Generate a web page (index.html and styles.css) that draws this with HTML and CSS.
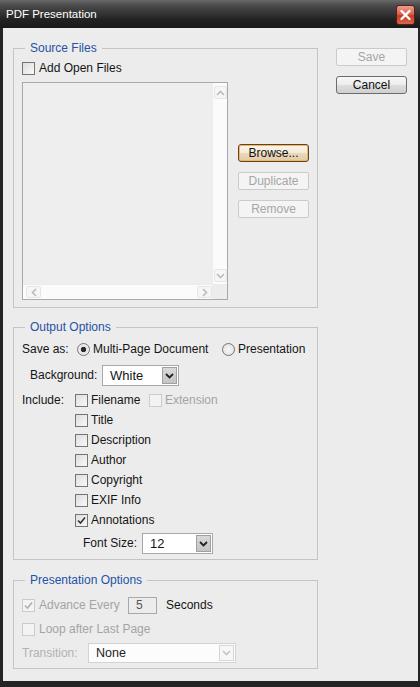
FILE: index.html
```html
<!DOCTYPE html>
<html>
<head>
<meta charset="utf-8">
<title>PDF Presentation</title>
<link rel="stylesheet" href="styles.css">
</head>
<body>
<div class="window">
  <div class="titlebar">
    <span class="title">PDF Presentation</span>
    <span class="close">
      <svg width="19" height="20" viewBox="0 0 19 20"><path d="M5.5 6 L13.5 14 M13.5 6 L5.5 14" stroke="#fff" stroke-width="2.4" stroke-linecap="round"/></svg>
    </span>
  </div>
  <div class="client">
    <div class="main">
      <fieldset class="group source">
        <legend>Source Files</legend>
        <div class="row add-open"><span class="cb"></span><span class="lbl">Add Open Files</span></div>
        <div class="source-body">
          <div class="listbox">
            <div class="list-area"></div>
            <div class="vscroll">
              <span class="sbtn"><svg width="9" height="6" viewBox="0 0 9 6"><path d="M1 5 L4.5 1.5 L8 5" fill="none" stroke="#b4bcc6" stroke-width="1.6"/></svg></span>
              <span class="sbtn"><svg width="9" height="6" viewBox="0 0 9 6"><path d="M1 1 L4.5 4.5 L8 1" fill="none" stroke="#b4bcc6" stroke-width="1.6"/></svg></span>
            </div>
            <div class="hscroll">
              <span class="sbtn h"><svg width="6" height="9" viewBox="0 0 6 9"><path d="M5 1 L1.5 4.5 L5 8" fill="none" stroke="#b4bcc6" stroke-width="1.6"/></svg></span>
              <span class="sbtn h"><svg width="6" height="9" viewBox="0 0 6 9"><path d="M1 1 L4.5 4.5 L1 8" fill="none" stroke="#b4bcc6" stroke-width="1.6"/></svg></span>
            </div>
            <div class="corner"></div>
          </div>
          <div class="src-buttons">
            <div class="btn default">Browse...</div>
            <div class="btn disabled">Duplicate</div>
            <div class="btn disabled">Remove</div>
          </div>
        </div>
      </fieldset>

      <fieldset class="group output">
        <legend>Output Options</legend>
        <div class="row saveas">
          <span class="lbl w-saveas">Save as:</span>
          <span class="opt w-multi"><span class="rb on"></span><span class="lbl">Multi-Page Document</span></span>
          <span class="opt"><span class="rb"></span><span class="lbl">Presentation</span></span>
        </div>
        <div class="row bg-row">
          <span class="lbl w-bg">Background:</span>
          <div class="select bg-select"><span class="sel-text">White</span><span class="sel-btn"><svg width="9" height="6" viewBox="0 0 9 6"><path d="M1 1 L4.5 4.5 L8 1" fill="none" stroke="#222" stroke-width="1.8"/></svg></span></div>
        </div>
        <div class="include">
          <div class="inc-row"><span class="lbl w-inc">Include:</span><span class="opt w-file"><span class="cb"></span><span class="lbl">Filename</span></span><span class="opt"><span class="cb dis"></span><span class="lbl dim">Extension</span></span></div>
          <div class="inc-row"><span class="w-inc"></span><span class="opt"><span class="cb"></span><span class="lbl">Title</span></span></div>
          <div class="inc-row"><span class="w-inc"></span><span class="opt"><span class="cb"></span><span class="lbl">Description</span></span></div>
          <div class="inc-row"><span class="w-inc"></span><span class="opt"><span class="cb"></span><span class="lbl">Author</span></span></div>
          <div class="inc-row"><span class="w-inc"></span><span class="opt"><span class="cb"></span><span class="lbl">Copyright</span></span></div>
          <div class="inc-row"><span class="w-inc"></span><span class="opt"><span class="cb"></span><span class="lbl">EXIF Info</span></span></div>
          <div class="inc-row"><span class="w-inc"></span><span class="opt"><span class="cb on"><svg width="11" height="11" viewBox="0 0 11 11"><path d="M2 5.5 L4.5 8 L9 2.5" fill="none" stroke="#333" stroke-width="1.6"/></svg></span><span class="lbl">Annotations</span></span></div>
        </div>
        <div class="row font-row">
          <span class="lbl w-font">Font Size:</span>
          <div class="select font-select"><span class="sel-text">12</span><span class="sel-btn"><svg width="9" height="6" viewBox="0 0 9 6"><path d="M1 1 L4.5 4.5 L8 1" fill="none" stroke="#222" stroke-width="1.8"/></svg></span></div>
        </div>
      </fieldset>

      <fieldset class="group pres">
        <legend>Presentation Options</legend>
        <div class="row adv-row">
          <span class="opt w-adv"><span class="cb dis"><svg width="11" height="11" viewBox="0 0 11 11"><path d="M2 5.5 L4.5 8 L9 2.5" fill="none" stroke="#b0b0b0" stroke-width="1.6"/></svg></span><span class="lbl dim">Advance Every</span></span>
          <span class="textbox">5</span>
          <span class="lbl seconds">Seconds</span>
        </div>
        <div class="row loop-row">
          <span class="opt"><span class="cb dis"></span><span class="lbl dim">Loop after Last Page</span></span>
        </div>
        <div class="row trans-row">
          <span class="lbl dim2 w-trans">Transition:</span>
          <div class="select trans-select dis"><span class="sel-text">None</span><span class="sel-btn"><svg width="9" height="6" viewBox="0 0 9 6"><path d="M1 1 L4.5 4.5 L8 1" fill="none" stroke="#c4c4c4" stroke-width="1.6"/></svg></span></div>
        </div>
      </fieldset>
    </div>
    <div class="side">
      <div class="btn disabled">Save</div>
      <div class="btn">Cancel</div>
    </div>
  </div>
</div>
</body>
</html>
```

FILE: styles.css
```css
html, body {
  margin: 0;
  padding: 0;
}
body {
  font-family: "Liberation Sans", Arial, sans-serif;
  font-size: 12px;
  color: #151515;
  background: #ececec;
}
.window {
  width: 420px;
  height: 687px;
  background: #242424;
  display: flex;
  flex-direction: column;
}
.titlebar {
  height: 28px;
  flex: none;
  display: flex;
  align-items: center;
  justify-content: space-between;
  padding: 0 5px 0 6px;
  box-sizing: border-box;
  background: linear-gradient(#6a6a6a 0%, #4a4a4a 20%, #333 50%, #222 70%, #191919 100%);
  color: #fff;
}
.title {
  font-size: 11.5px;
  letter-spacing: 0;
}
.close {
  width: 19px;
  height: 20px;
  box-sizing: border-box;
  border: 1px solid #5a2018;
  border-radius: 3px;
  background: linear-gradient(#eaa08e 0%, #d9624a 45%, #c23c22 55%, #d8664b 100%);
  display: flex;
  align-items: center;
  justify-content: center;
  margin-top: 1px;
}
.close svg { display: block; margin: -1px; }
.client {
  flex: 1;
  margin: 0 2px 6px 3px;
  background: #ececec;
  display: flex;
  align-items: flex-start;
  padding: 13px 0 0 10px;
}
.main {
  width: 305px;
  flex: none;
}
.side {
  margin-left: 18px;
  margin-top: 7px;
  display: flex;
  flex-direction: column;
  gap: 10px;
}

/* group boxes */
.group {
  margin: 0;
  padding: 0 8px 7px;
  border: 1px solid #c4c4c4;
  min-width: 0;
}
.group legend {
  padding: 0 5px;
  margin-left: 3px;
  color: #2651a6;
  font-size: 12px;
  line-height: 14px;
}
.output { margin-top: 12px; padding-bottom: 5px; }
.pres { margin-top: 13px; padding-bottom: 5px; }

/* rows */
.row {
  display: flex;
  align-items: center;
  line-height: 15px;
}
.opt {
  display: flex;
  align-items: center;
}
.lbl { white-space: nowrap; }
.dim { color: #a4a4a4; }
.dim2 { color: #b2b2b2; }

.cb {
  width: 13px;
  height: 13px;
  box-sizing: border-box;
  border: 1px solid #747474;
  background: linear-gradient(135deg, #dedede, #f8f8f8);
  margin-right: 3px;
  flex: none;
  display: flex;
  align-items: center;
  justify-content: center;
}
.cb svg { display: block; }
.cb.dis {
  border-color: #cbcbcb;
  background: #f3f3f3;
}
.rb {
  width: 13px;
  height: 13px;
  box-sizing: border-box;
  border: 1px solid #747474;
  border-radius: 50%;
  background: radial-gradient(circle, #f8f8f8, #dcdcdc);
  margin-right: 3px;
  flex: none;
  position: relative;
}
.rb.on {
  background: radial-gradient(circle, #2a2a2a 0, #2a2a2a 2.3px, #e4e4e4 3px, #f4f4f4 100%);
}

/* source files */
.add-open { margin-top: 6px; height: 15px; }
.add-open .cb { margin-right: 4px; }
.source-body {
  display: flex;
  align-items: flex-start;
  margin-top: 6px;
}
.listbox {
  width: 206px;
  height: 218px;
  box-sizing: border-box;
  border: 1px solid #a9a9a9;
  background: #efefef;
  display: grid;
  grid-template-columns: 1fr 15px;
  grid-template-rows: 1fr 15px;
}
.list-area { background: #eeeeee; }
.vscroll {
  background: #fbfbfb;
  border-left: 1px solid #ececec;
  display: flex;
  flex-direction: column;
  justify-content: space-between;
  align-items: center;
  padding: 3px 0 2px;
}
.hscroll {
  background: #fbfbfb;
  border-top: 1px solid #ececec;
  display: flex;
  justify-content: space-between;
  align-items: center;
  padding: 0 0 0 3px;
}
.corner { background: #ececec; }
.sbtn {
  width: 13px;
  height: 13px;
  box-sizing: border-box;
  border: 1px solid #e6e6e6;
  border-radius: 2px;
  background: #f6f6f6;
  display: flex;
  align-items: center;
  justify-content: center;
}
.sbtn.h { width: 15px; height: 12px; }
.sbtn svg { display: block; }
.src-buttons {
  margin-left: 10px;
  padding-top: 62px;
  display: flex;
  flex-direction: column;
  gap: 10px;
}

/* buttons */
.btn {
  width: 71px;
  height: 18px;
  box-sizing: border-box;
  border: 1px solid #6c6c6c;
  border-radius: 3px;
  background: linear-gradient(#f7f7f7 0%, #ececec 50%, #dddddd 52%, #cfcfcf 100%);
  display: flex;
  align-items: center;
  justify-content: center;
  font-size: 12px;
  color: #111;
  line-height: 14px;
}
.btn.default {
  border-color: #5e4526;
  box-shadow: inset 0 0 0 1px #f0b463;
  background: linear-gradient(#fdf6ea 0%, #f5ead8 50%, #ead8bb 52%, #e2cba7 100%);
}
.btn.disabled {
  border-color: #cbcbcb;
  background: #f4f4f4;
  color: #a6a6a6;
  border-radius: 2px;
}

/* selects */
.select {
  height: 21px;
  box-sizing: border-box;
  border: 1px solid #a9a9a9;
  background: #fff;
  display: flex;
  align-items: stretch;
}
.sel-text {
  flex: 1;
  display: flex;
  align-items: center;
  padding-left: 7px;
  font-size: 13px;
  color: #151515;
}
.sel-btn {
  width: 15px;
  margin: 1px;
  background: linear-gradient(#d9d9d9, #c4c4c4);
  border: 1px solid #a0a0a0;
  box-sizing: border-box;
  display: flex;
  align-items: center;
  justify-content: center;
}
.select.dis {
  border-color: #d3d3d3;
  background: #fcfcfc;
}
.select.dis .sel-btn {
  background: #f7f7f7;
  border-color: #d6d6d6;
}

/* output options */
.saveas { margin-top: 6px; height: 18px; }
.w-saveas { width: 55px; }
.w-multi { width: 145px; }
.bg-row { margin-top: 7px; height: 21px; padding-left: 8px; }
.w-bg { width: 72px; }
.bg-select { width: 77px; }
.include { margin-top: 4px; }
.inc-row {
  height: 20px;
  display: flex;
  align-items: center;
  line-height: 15px;
}
.w-inc { width: 53px; flex: none; }
.w-file { width: 74px; }
.font-row { margin-top: 3px; height: 21px; padding-left: 61px; }
.w-font { width: 59px; }
.font-select { width: 71px; }

/* presentation options */
.adv-row { margin-top: 9px; height: 18px; }
.adv-row .cb, .loop-row .cb { margin-right: 4px; }
.w-adv { width: 106px; }
.textbox {
  width: 29px;
  height: 17px;
  box-sizing: border-box;
  border: 1px solid #a9a9a9;
  background: #ececec;
  padding-left: 7px;
  color: #555;
  line-height: 15px;
  font-size: 12px;
}
.seconds { margin-left: 9px; color: #151515; }
.loop-row { margin-top: 6px; height: 18px; }
.trans-row { margin-top: 5px; height: 20px; }
.w-trans { width: 66px; }
.trans-select { width: 148px; height: 20px; }
.trans-select .sel-text { color: #222; font-size: 12.5px; }
```
